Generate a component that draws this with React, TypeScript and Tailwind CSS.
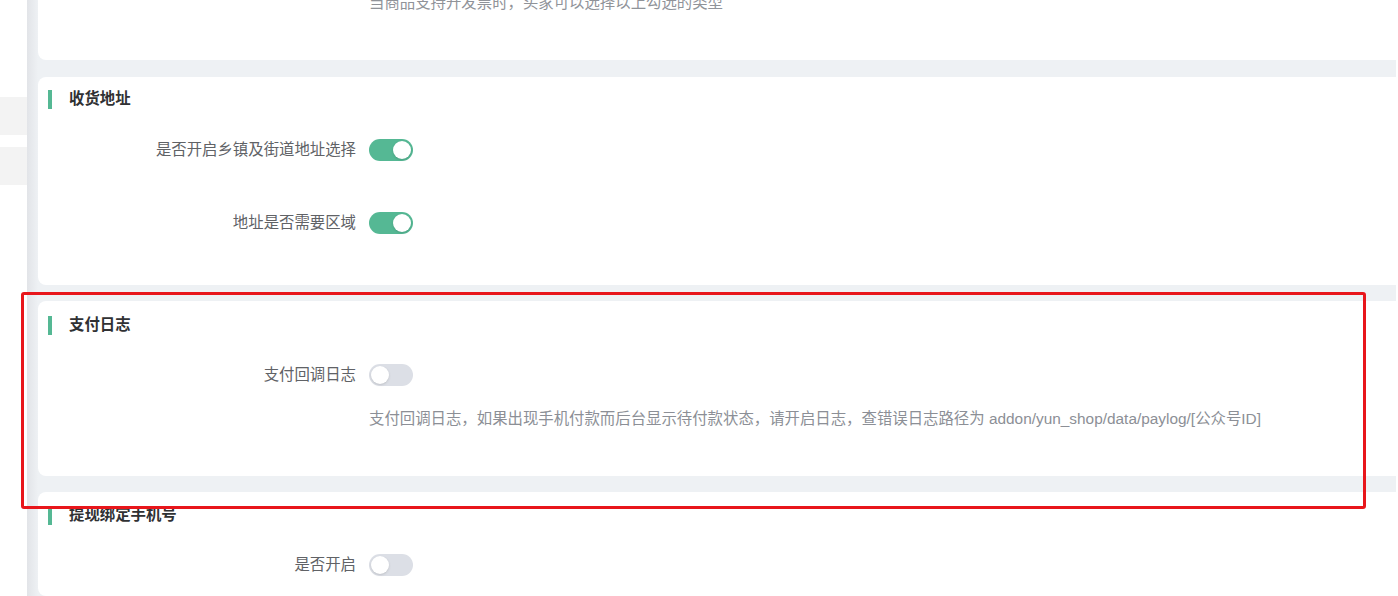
const font = { fontFamily: '"Liberation Sans", "Noto Sans CJK SC", sans-serif' };

function Toggle({ on }: { on: boolean }) {
  return (
    <div
      className={`relative h-[22px] w-[44px] shrink-0 rounded-full ${
        on ? "bg-[#55b894]" : "bg-[#dcdfe6]"
      }`}
    >
      <span
        className={`absolute top-[2px] h-[18px] w-[18px] rounded-full bg-white shadow-sm ${
          on ? "left-[24px]" : "left-[2px]"
        }`}
      />
    </div>
  );
}

function Title({ text }: { text: string }) {
  return (
    <div className="flex h-[20px] items-center">
      <span className="ml-[10px] h-[19px] w-[4px] bg-[#55b894]" />
      <span className="ml-[17px] text-[15.4px] font-bold text-[#303133]">{text}</span>
    </div>
  );
}

function Row({ label, on, className }: { label: string; on: boolean; className?: string }) {
  return (
    <div className={`flex items-center ${className ?? ""}`}>
      <div className="w-[318px] text-right text-[15.4px] leading-[22px] text-[#606266]">
        {label}
      </div>
      <div className="ml-[13px]">
        <Toggle on={on} />
      </div>
    </div>
  );
}

export default function App() {
  return (
    <div className="relative flex h-[596px] w-[1398px] overflow-hidden bg-white" style={font}>
      {/* left menu edge */}
      <div className="w-[27px] shrink-0 bg-white">
        <div className="mt-[97px] h-[38px] bg-[#f3f3f3]" />
        <div className="mt-[12px] h-[38px] bg-[#f3f3f3]" />
      </div>

      <div className="flex w-[1369px] shrink-0 bg-[#eef1f4]">
        <div className="w-[11px] shrink-0 bg-linear-to-r from-[#e2e4e8] to-[#eef1f4]" />

        <div className="flex flex-1 flex-col">
          {/* card 1, scrolled */}
          <div className="h-[60px] overflow-hidden rounded-bl-lg bg-white">
            <p className="ml-[331px] mt-[-8px] text-[15.4px] leading-[22px] text-[#909399]">
              当商品支持开发票时，买家可以选择以上勾选的类型
            </p>
          </div>

          {/* 收货地址 */}
          <div className="mt-[17px] h-[208px] rounded-l-lg bg-white pt-[12px]">
            <Title text="收货地址" />
            <Row label="是否开启乡镇及街道地址选择" on className="mt-[30px]" />
            <Row label="地址是否需要区域" on className="mt-[51px]" />
          </div>

          {/* 支付日志 */}
          <div className="mt-[16px] h-[175px] rounded-l-lg bg-white pt-[14px]">
            <Title text="支付日志" />
            <Row label="支付回调日志" on={false} className="mt-[29px]" />
            <p className="ml-[331px] mt-[22px] text-[15.4px] leading-[22px] text-[#8c8f96]">
              支付回调日志，如果出现手机付款而后台显示待付款状态，请开启日志，查错误日志路径为 addon/yun_shop/data/paylog/[公众号ID]
            </p>
          </div>

          {/* 提现绑定手机号 */}
          <div className="mt-[16px] flex-1 rounded-l-lg bg-white pt-[13px]">
            <Title text="提现绑定手机号" />
            <Row label="是否开启" on={false} className="mt-[29px]" />
          </div>
        </div>
      </div>

      {/* annotation */}
      <div className="absolute left-[21px] top-[292px] h-[217px] w-[1345px] rounded-[3px] border-[3px] border-[#e8161b]" />
    </div>
  );
}
